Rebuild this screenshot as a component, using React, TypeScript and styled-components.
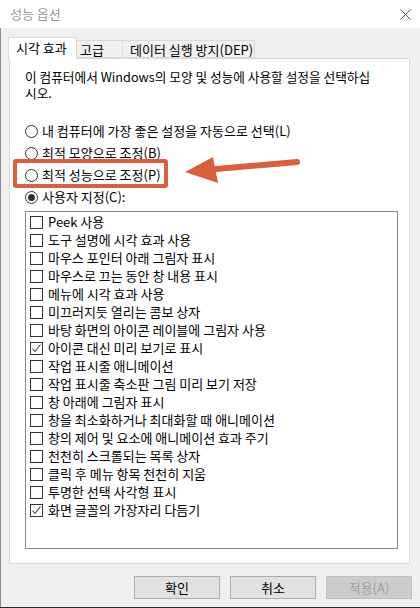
import React from "react";
import styled, { createGlobalStyle } from "styled-components";

const Global = createGlobalStyle`
  html, body { margin: 0; padding: 0; background: #f0f0f0; }
  * { box-sizing: border-box; }
  body { font-family: "Noto Sans CJK KR", "Noto Sans", sans-serif; font-size: 13px; color: #000; }
`;

const Window = styled.div`
  position: relative;
  width: 420px;
  height: 608px;
  display: flex;
  flex-direction: column;
  background: #f0f0f0;
  border-bottom: 1px solid #2b2b2b;
  overflow: hidden;
`;

const TitleBar = styled.div`
  height: 28px;
  flex: none;
  background: #fff;
  display: flex;
  align-items: center;
  justify-content: space-between;
  padding: 0 9px 0 10px;
`;

const Title = styled.span`
  color: #9a9a9a;
  font-size: 13px;
  line-height: 16px;
`;

const Body = styled.div`
  flex: 1;
  display: flex;
  flex-direction: column;
  padding: 9px 10px 0 8px;
  border-left: 1px solid #8c8c8c;
`;

const TabStrip = styled.div`
  display: flex;
  align-items: flex-end;
  height: 21px;
  margin-left: -1px;
  position: relative;
  z-index: 1;
`;

const Tab = styled.div<{ $active?: boolean; $width: number; $pad: number }>`
  width: ${(p) => p.$width}px;
  height: ${(p) => (p.$active ? "22px" : "18px")};
  padding: ${(p) => (p.$active ? `2px 0 0 ${p.$pad}px` : `1px 0 0 ${p.$pad}px`)};
  background: ${(p) => (p.$active ? "#fff" : "#f0f0f0")};
  border: 1px solid #d9d9d9;
  border-bottom: ${(p) => (p.$active ? "none" : "1px solid #d9d9d9")};
  margin-left: ${(p) => (p.$active ? "0" : "-1px")};
  line-height: 16px;
  font-size: 13px;
  white-space: nowrap;
  margin-bottom: ${(p) => (p.$active ? "-1px" : "0")};
`;

const Panel = styled.div`
  height: 506px;
  background: #fff;
  border: 1px solid #d9d9d9;
  display: flex;
  flex-direction: column;
  padding: 10px 12px 0 15px;
`;

const Description = styled.div`
  display: flex;
  flex-direction: column;
  font-size: 12.7px;
  white-space: nowrap;
`;

const DescLine = styled.span`
  display: block;
  height: 16px;
  line-height: 16px;
`;

const RadioGroup = styled.div`
  margin-top: 19px;
  display: flex;
  flex-direction: column;
`;

const RadioRow = styled.label`
  height: 22px;
  display: flex;
  align-items: center;
  gap: 4px;
  line-height: 16px;
  font-size: 13px;
  white-space: nowrap;
`;

const RadioCircle = styled.span<{ $checked?: boolean }>`
  width: 13px;
  height: 13px;
  border-radius: 50%;
  border: 1px solid #333;
  background: #fff;
  display: inline-flex;
  align-items: center;
  justify-content: center;
  flex: none;
  &::after {
    content: "";
    width: 7px;
    height: 7px;
    border-radius: 50%;
    background: ${(p) => (p.$checked ? "#333" : "transparent")};
  }
`;

const ListBox = styled.div`
  margin-top: 3px;
  height: 338px;
  width: 373px;
  border: 1px solid #828790;
  padding: 1px 0 0 4px;
  display: flex;
  flex-direction: column;
`;

const CheckRow = styled.label`
  height: 18px;
  display: flex;
  align-items: center;
  gap: 5px;
  line-height: 16px;
  font-size: 13px;
  white-space: nowrap;
`;

const CheckBox = styled.span`
  width: 13px;
  height: 13px;
  border: 1px solid #333;
  background: #fff;
  display: inline-flex;
  align-items: center;
  justify-content: center;
  flex: none;
`;

const ButtonRow = styled.div`
  display: flex;
  justify-content: flex-end;
  gap: 10px;
  margin-top: 12px;
  margin-right: -2px;
`;

const Button = styled.button<{ $disabled?: boolean }>`
  width: 86px;
  height: 23px;
  font-family: inherit;
  font-size: 13px;
  line-height: 16px;
  padding: 0;
  background: ${(p) => (p.$disabled ? "#cccccc" : "#e1e1e1")};
  color: ${(p) => (p.$disabled ? "#a0a0a0" : "#000")};
  border: 1px solid ${(p) => (p.$disabled ? "#bfbfbf" : "#adadad")};
`;

const Highlight = styled.div`
  position: absolute;
  left: 13px;
  top: 159px;
  width: 155px;
  height: 29px;
  border: 4px solid #d9603f;
  border-radius: 3px;
  pointer-events: none;
`;

const ArrowSvg = styled.svg`
  position: absolute;
  left: 180px;
  top: 150px;
  pointer-events: none;
`;

const CloseIcon = () => (
  <svg width="11" height="11" viewBox="0 0 11 11">
    <path d="M0.5 0.5 L10.5 10.5 M10.5 0.5 L0.5 10.5" stroke="#555" strokeWidth="1" fill="none" />
  </svg>
);

const CheckMark = () => (
  <svg width="11" height="11" viewBox="0 0 11 11">
    <path d="M1.5 5.5 L4 8.5 L9.5 1.5" stroke="#444" strokeWidth="1.1" fill="none" />
  </svg>
);

const radios = [
  { label: "내 컴퓨터에 가장 좋은 설정을 자동으로 선택(L)", checked: false },
  { label: "최적 모양으로 조정(B)", checked: false },
  { label: "최적 성능으로 조정(P)", checked: false },
  { label: "사용자 지정(C):", checked: true },
];

const items = [
  { label: "Peek 사용", checked: false },
  { label: "도구 설명에 시각 효과 사용", checked: false },
  { label: "마우스 포인터 아래 그림자 표시", checked: false },
  { label: "마우스로 끄는 동안 창 내용 표시", checked: false },
  { label: "메뉴에 시각 효과 사용", checked: false },
  { label: "미끄러지듯 열리는 콤보 상자", checked: false },
  { label: "바탕 화면의 아이콘 레이블에 그림자 사용", checked: false },
  { label: "아이콘 대신 미리 보기로 표시", checked: true },
  { label: "작업 표시줄 애니메이션", checked: false },
  { label: "작업 표시줄 축소판 그림 미리 보기 저장", checked: false },
  { label: "창 아래에 그림자 표시", checked: false },
  { label: "창을 최소화하거나 최대화할 때 애니메이션", checked: false },
  { label: "창의 제어 및 요소에 애니메이션 효과 주기", checked: false },
  { label: "천천히 스크롤되는 목록 상자", checked: false },
  { label: "클릭 후 메뉴 항목 천천히 지움", checked: false },
  { label: "투명한 선택 사각형 표시", checked: false },
  { label: "화면 글꼴의 가장자리 다듬기", checked: true },
];

export default function App() {
  return (
    <>
      <Global />
      <Window>
        <TitleBar>
          <Title>성능 옵션</Title>
          <CloseIcon />
        </TitleBar>
        <Body>
          <TabStrip>
            <Tab $active $width={69} $pad={7}>시각 효과</Tab>
            <Tab $width={47} $pad={3}>고급</Tab>
            <Tab $width={133} $pad={7}>데이터 실행 방지(DEP)</Tab>
          </TabStrip>
          <Panel>
            <Description>
              <DescLine>이 컴퓨터에서 Windows의 모양 및 성능에 사용할 설정을 선택하십</DescLine>
              <DescLine>시오.</DescLine>
            </Description>
            <RadioGroup>
              {radios.map((r) => (
                <RadioRow key={r.label}>
                  <RadioCircle $checked={r.checked} />
                  {r.label}
                </RadioRow>
              ))}
            </RadioGroup>
            <ListBox>
              {items.map((it) => (
                <CheckRow key={it.label}>
                  <CheckBox>{it.checked && <CheckMark />}</CheckBox>
                  {it.label}
                </CheckRow>
              ))}
            </ListBox>
          </Panel>
          <ButtonRow>
            <Button>확인</Button>
            <Button>취소</Button>
            <Button $disabled>적용(A)</Button>
          </ButtonRow>
        </Body>
        <Highlight />
        <ArrowSvg width="125" height="40" viewBox="0 0 125 40">
          <path d="M117 12 L36 19" stroke="#d9603f" strokeWidth="6" strokeLinecap="round" fill="none" />
          <path d="M5 22 L33 7 L38 33 Z" fill="#d9603f" />
        </ArrowSvg>
      </Window>
    </>
  );
}
